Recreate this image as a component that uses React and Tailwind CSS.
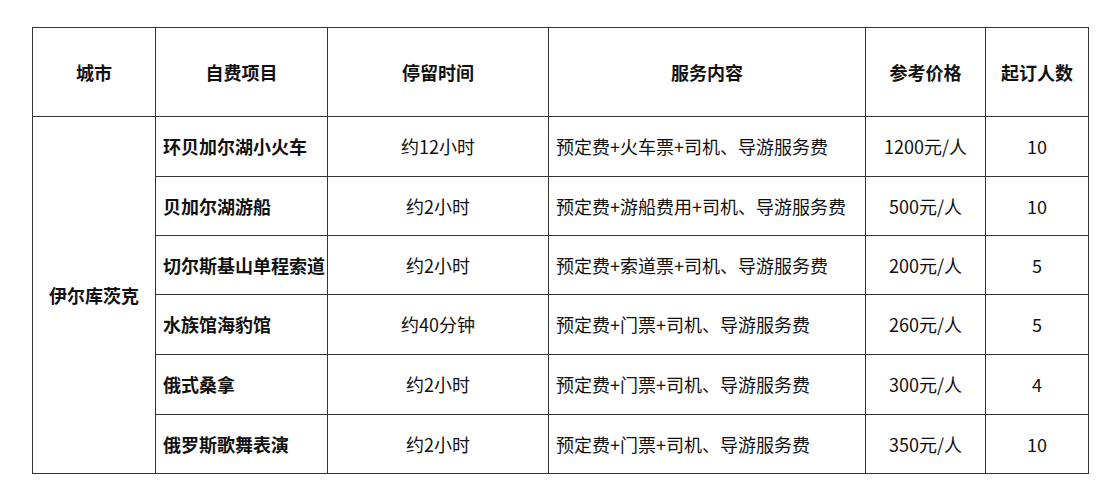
import React from 'react';

const rows = [
  { item: '环贝加尔湖小火车', time: '约12小时', service: '预定费+火车票+司机、导游服务费', price: '1200元/人', min: '10', h: 'h-[60px]' },
  { item: '贝加尔湖游船', time: '约2小时', service: '预定费+游船费用+司机、导游服务费', price: '500元/人', min: '10', h: 'h-[59px]' },
  { item: '切尔斯基山单程索道', time: '约2小时', service: '预定费+索道票+司机、导游服务费', price: '200元/人', min: '5', h: 'h-[59px]' },
  { item: '水族馆海豹馆', time: '约40分钟', service: '预定费+门票+司机、导游服务费', price: '260元/人', min: '5', h: 'h-[60px]' },
  { item: '俄式桑拿', time: '约2小时', service: '预定费+门票+司机、导游服务费', price: '300元/人', min: '4', h: 'h-[60px]' },
  { item: '俄罗斯歌舞表演', time: '约2小时', service: '预定费+门票+司机、导游服务费', price: '350元/人', min: '10', h: 'h-[59px]' },
];

const cell = 'border border-[#333] p-0';

export default function App() {
  return (
    <div className="w-[1119px] h-[500px] bg-white pt-[27px] pl-[32px] text-[18px] text-[#111] font-['Noto_Sans_CJK_SC','Noto_Sans',sans-serif]">
      <table className="border-collapse table-fixed w-[1056px]">
        <colgroup>
          <col className="w-[123px]" />
          <col className="w-[172px]" />
          <col className="w-[221px]" />
          <col className="w-[317px]" />
          <col className="w-[120px]" />
          <col className="w-[103px]" />
        </colgroup>
        <thead>
          <tr className="h-[89px] font-bold">
            <th className={cell}>城市</th>
            <th className={cell}>自费项目</th>
            <th className={cell}>停留时间</th>
            <th className={cell}>服务内容</th>
            <th className={cell}>参考价格</th>
            <th className={cell}>起订人数</th>
          </tr>
        </thead>
        <tbody>
          {rows.map((r, i) => (
            <tr key={r.item} className={r.h}>
              {i === 0 && (
                <td rowSpan={6} className={`${cell} text-center font-bold`}>伊尔库茨克</td>
              )}
              <td className={`${cell} pl-[7px] font-bold whitespace-nowrap`}>{r.item}</td>
              <td className={`${cell} text-center`}>{r.time}</td>
              <td className={`${cell} pl-[7px] whitespace-nowrap`}>{r.service}</td>
              <td className={`${cell} text-center`}>{r.price}</td>
              <td className={`${cell} text-center`}>{r.min}</td>
            </tr>
          ))}
        </tbody>
      </table>
    </div>
  );
}
